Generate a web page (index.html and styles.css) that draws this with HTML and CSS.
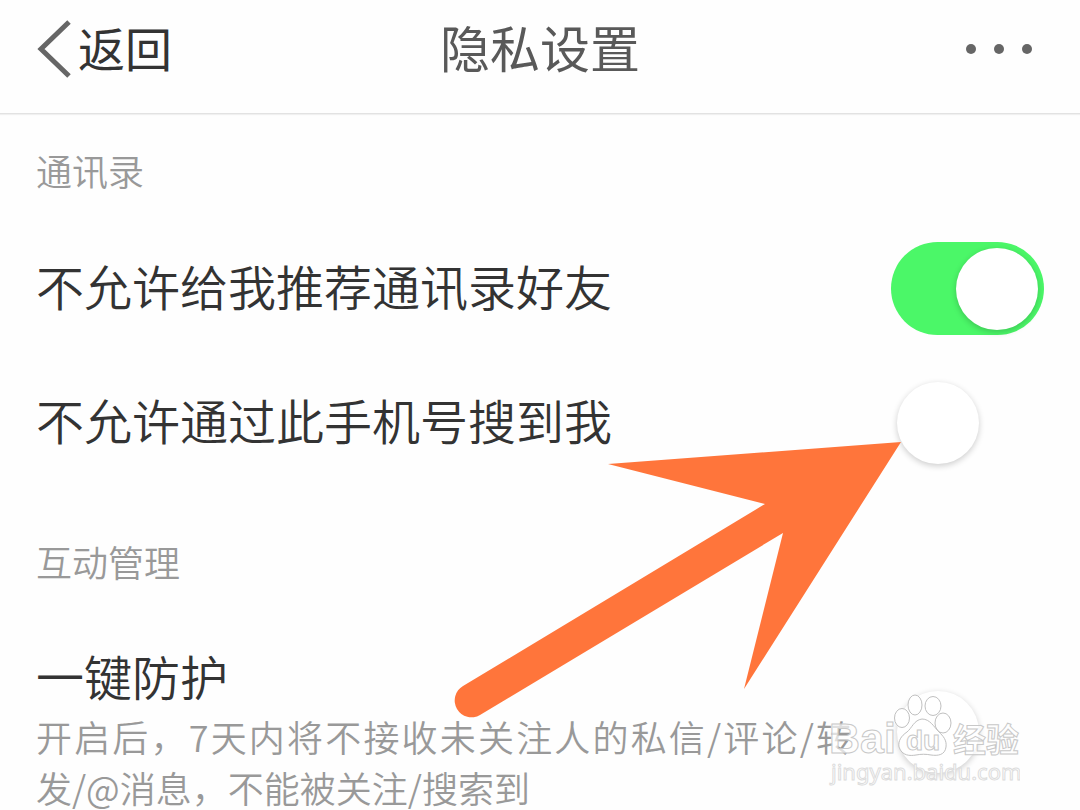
FILE: index.html
```html
<!DOCTYPE html>
<html lang="zh-CN">
<head>
    <meta charset="UTF-8">
    <meta name="viewport" content="width=device-width, initial-scale=1.0">
    <title>隐私设置</title>
    <link rel="stylesheet" href="styles.css">
</head>
<body>

<div class="pagina">
    <header class="barra">
        <button type="button" class="volver">
            <svg width="36" height="58" viewBox="0 0 36 58" aria-hidden="true">
                <path d="M33 2 L5 29 L33 56" fill="none" stroke="#666" stroke-width="5"/>
            </svg>
            <span>返回</span>
        </button>
        <h1>隐私设置</h1>
        <button type="button" class="mas" aria-label="更多">
            <svg width="68" height="12" viewBox="0 0 68 12" aria-hidden="true">
                <g fill="#666">
                    <circle cx="6" cy="6" r="5"/>
                    <circle cx="34" cy="6" r="5"/>
                    <circle cx="62" cy="6" r="5"/>
                </g>
            </svg>
        </button>
    </header>

    <main>
        <section>
            <h2>通讯录</h2>
            <div class="fila">
                <label for="recomendar">不允许给我推荐通讯录好友</label>
                <input type="checkbox" class="interruptor" id="recomendar" checked>
            </div>
            <div class="fila">
                <label for="buscar">不允许通过此手机号搜到我</label>
                <input type="checkbox" class="interruptor" id="buscar">
            </div>
        </section>

        <section class="interaccion">
            <h2>互动管理</h2>
            <div class="fila fila-larga">
                <div class="texto">
                    <label for="proteger">一键防护</label>
                    <p>开启后，7天内将不接收未关注人的私信/评论/转发/@消息，不能被关注/搜索到</p>
                </div>
                <input type="checkbox" class="interruptor" id="proteger">
            </div>
        </section>
    </main>

    <svg class="flecha" width="448" height="276" viewBox="0 0 448 276" aria-hidden="true">
        <path d="M448 0 L155 22 L312 62 L10 244 A16 16 0 0 0 27 273 L330 91 L291 247 Z" fill="#ff753b"/>
    </svg>

    <svg class="marca" width="210" height="100" viewBox="0 0 210 100">
        <g class="huella">
            <ellipse cx="92" cy="28" rx="7.5" ry="9.5"/>
            <ellipse cx="105" cy="15" rx="7" ry="10"/>
            <ellipse cx="123" cy="16" rx="8" ry="9.5"/>
            <ellipse cx="133" cy="33" rx="8" ry="10"/>
            <path d="M112 29 C104 30 102 38 97 42 C91 46 88 51 89 57 C92 66 100 66 106 65 C111 64 116 64 121 65 C128 66 135 65 136 57 C137 50 133 46 129 42 C124 37 120 29 112 29 Z"/>
        </g>
        <text class="logo" x="19" y="63">Bai</text>
        <text class="du" x="96" y="60">du</text>
        <text class="jingyan" x="143" y="62">经验</text>
        <text class="sitio" x="21" y="90">jingyan.baidu.com</text>
    </svg>
</div>

</body>
</html>
```

FILE: styles.css
```css
* {
    box-sizing: border-box;
}
body {
    margin: 0;
    background-color: #fefefe;
    color: #333;
    font-family: "Noto Sans CJK SC", sans-serif;
    font-weight: 350;
}
.pagina {
    position: relative;
    overflow: hidden;
}
.barra {
    display: grid;
    grid-template-columns: 1fr auto 1fr;
    align-items: center;
    padding: 14px 36px 29px;
    border-bottom: 1px solid #e2e2e2;
    box-shadow: 0 1px 1px #f0f0f0;
}
.barra button {
    padding: 0;
    border: none;
    background: none;
    color: #333;
    font-family: inherit;
    cursor: pointer;
}
.barra svg {
    display: block;
}
.barra .volver {
    display: flex;
    align-items: center;
    justify-self: start;
    gap: 6px;
    font-size: 47px;
    line-height: 64px;
    font-weight: 400;
}
.volver span {
    padding-bottom: 4px;
}
.barra .mas {
    justify-self: end;
    padding-right: 11px;
}
h1 {
    margin: 0;
    padding-bottom: 6px;
    color: #595959;
    font-size: 50px;
    line-height: 64px;
    font-weight: 400;
}
main {
    padding: 30px 36px 16px;
}
h2 {
    margin: 0 0 25px;
    color: #999;
    font-size: 36px;
    line-height: 52px;
    font-weight: 350;
}
.fila {
    display: flex;
    align-items: center;
    justify-content: space-between;
    min-height: 134px;
}
.fila label {
    display: block;
    padding-bottom: 6px;
    font-size: 48px;
    line-height: 60px;
}
.interaccion {
    padding-top: 46px;
}
.fila-larga {
    padding-top: 33px;
}
.texto {
    flex: 0 1 816px;
    padding-bottom: 4px;
}
.texto p {
    margin: 0;
    color: #999;
    font-size: 36px;
    line-height: 51px;
    text-align: justify;
}
.interruptor {
    appearance: none;
    flex: none;
    width: 153px;
    height: 93px;
    margin: 0;
    padding: 6px;
    border-radius: 47px;
    cursor: pointer;
}
.interruptor::before {
    content: "";
    display: block;
    width: 82px;
    height: 82px;
    border-radius: 50%;
    background-color: #fff;
    box-shadow: 0 2px 6px rgba(0, 0, 0, 0.2);
}
.interruptor:checked {
    background-color: #4bf768;
}
.interruptor:checked::before {
    margin-left: auto;
}
.flecha {
    position: absolute;
    top: 442px;
    right: 179px;
    pointer-events: none;
}
.marca {
    position: absolute;
    top: 690px;
    right: 60px;
    fill: rgba(255, 255, 255, 0.7);
    stroke: #c8c8c8;
    stroke-width: 1px;
    font-weight: 700;
    pointer-events: none;
}
.huella {
    fill: #fff;
    stroke: #c0c0c0;
}
.logo {
    font-family: "Liberation Sans", Arial, sans-serif;
    font-size: 43px;
}
.du {
    font-family: "Liberation Sans", Arial, sans-serif;
    font-size: 28px;
}
.jingyan {
    font-size: 33px;
}
.sitio {
    fill: #fff;
    stroke: #dcdcdc;
    font-family: "Noto Sans", sans-serif;
    font-size: 22px;
    font-weight: 400;
}
```
